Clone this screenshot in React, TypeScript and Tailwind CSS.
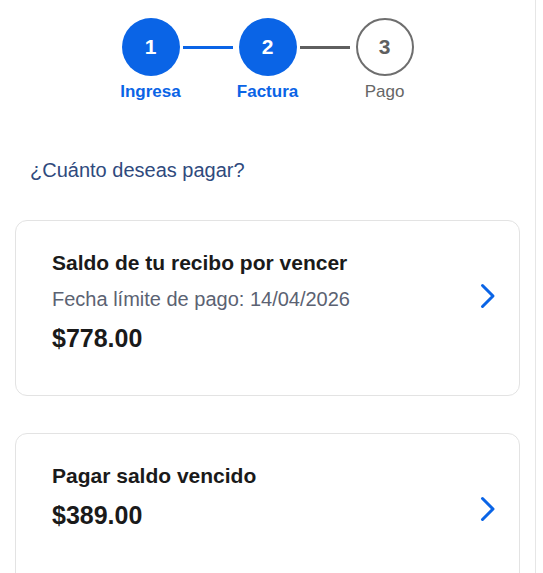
import React from 'react';

type Step = { n: number; label: string; state: 'done' | 'current' | 'todo' };

const steps: Step[] = [
    { n: 1, label: 'Ingresa', state: 'done' },
    { n: 2, label: 'Factura', state: 'current' },
    { n: 3, label: 'Pago', state: 'todo' },
];

function Chevron() {
    return (
        <svg width="16" height="26" viewBox="0 0 16 26" fill="none" className="shrink-0">
            <polyline points="2.5,2.5 13,13 2.5,23.5" stroke="#0a64e6" strokeWidth="3" strokeLinecap="round" strokeLinejoin="round" />
        </svg>
    );
}

function StepItem({ step }: { step: Step }) {
    const active = step.state !== 'todo';
    return (
        <div className="flex w-[58px] flex-col items-center">
            <div
                className={
                    active
                        ? 'flex h-[58px] w-[58px] items-center justify-center rounded-full bg-[#0a64e6] text-[21px] font-bold text-white'
                        : 'flex h-[58px] w-[58px] items-center justify-center rounded-full border-2 border-[#6e6e6e] bg-white text-[21px] font-bold text-[#5f5f5f]'
                }
            >
                {step.n}
            </div>
            <span
                className={
                    active
                        ? 'mt-[6px] whitespace-nowrap text-[17px] font-bold leading-[20px] text-[#0a64e6]'
                        : 'mt-[6px] whitespace-nowrap text-[17px] leading-[20px] text-[#666666]'
                }
            >
                {step.label}
            </span>
        </div>
    );
}

function BalanceCard({ title, subtitle, amount }: { title: string; subtitle?: string; amount: string }) {
    return (
        <div className="flex min-h-[176px] cursor-pointer items-stretch rounded-[12px] border border-[#e3e3e3] bg-white pb-[43px] pl-[36px] pr-[23px] pt-[31px]">
            <div className="flex flex-1 flex-col">
                <h3 className="text-[21px] font-bold leading-[22px] text-[#1a1a1a]">{title}</h3>
                {subtitle && <p className="mt-[14px] text-[20px] leading-[22px] text-[#5b6272]">{subtitle}</p>}
                <p className="mt-[14px] text-[25px] font-bold leading-[28px] text-[#1a1a1a]">{amount}</p>
            </div>
            {/* chevron sits a bit above the card's middle */}
            <div className="flex items-center pb-[12px]">
                <Chevron />
            </div>
        </div>
    );
}

export default function App() {
    return (
        <div className="h-screen w-[536px] overflow-hidden border-r border-[#e6e6e6] bg-white font-['Liberation_Sans',Arial,sans-serif]">
            <div className="flex justify-center pt-[18px]">
                <StepItem step={steps[0]} />
                <div className="ml-[3px] mr-[6px] mt-[28px] h-[3px] w-[50px] bg-[#0a64e6]" />
                <StepItem step={steps[1]} />
                <div className="ml-[3px] mr-[6px] mt-[28px] h-[3px] w-[50px] bg-[#5f5f5f]" />
                <StepItem step={steps[2]} />
            </div>

            <h2 className="mt-[56px] px-[30px] text-[20px] leading-[24px] text-[#2f4a7d]">¿Cuánto deseas pagar?</h2>

            <div className="mx-[15px] mt-[38px] flex flex-col gap-[37px]">
                <BalanceCard title="Saldo de tu recibo por vencer" subtitle="Fecha límite de pago: 14/04/2026" amount="$778.00" />
                <BalanceCard title="Pagar saldo vencido" amount="$389.00" />
            </div>
        </div>
    );
}
